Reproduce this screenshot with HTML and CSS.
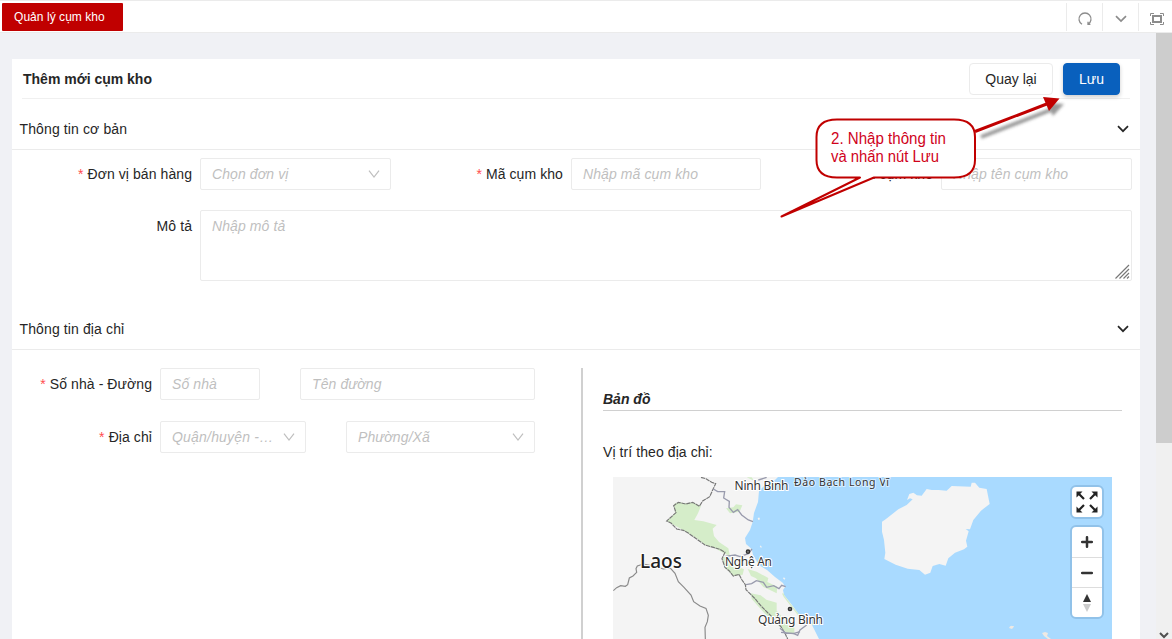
FILE: index.html
```html
<!DOCTYPE html>
<html lang="vi">
<head>
<meta charset="utf-8">
<title>Quản lý cụm kho</title>
<link rel="stylesheet" href="styles.css">
</head>
<body>
<div class="app">
  <header class="topbar">
    <div class="tab">Quản lý cụm kho</div>
    <div class="tools">
      <div class="tool"><svg width="16" height="16" viewBox="0 0 16 16"><path d="M5 13.2A6 6 0 1 1 11 13.2M11 10.8V13.4H13.4" fill="none" stroke="#8c8c8c" stroke-width="1.3"/></svg></div>
      <div class="tool"><svg width="12" height="12" viewBox="0 0 12 12"><path d="M1 3.2L6 8.1L11 3.2" fill="none" stroke="#8c8c8c" stroke-width="1.7"/></svg></div>
      <div class="tool"><svg width="14" height="12" viewBox="0 0 14 12"><path d="M.5 3V.5H4M10 .5H13.5V3M13.5 9V11.5H10M4 11.5H.5V9" fill="none" stroke="#8c8c8c"/><rect x="3" y="3" width="8" height="6" fill="none" stroke="#8c8c8c" stroke-width="2"/></svg></div>
    </div>
  </header>
  <div class="body">
    <main class="card">
      <div class="card-head">
        <h1>Thêm mới cụm kho</h1>
        <div class="actions"><button class="btn">Quay lại</button><button class="btn primary">Lưu</button></div>
      </div>
      <div class="section-head"><span>Thông tin cơ bản</span><svg width="12" height="8" viewBox="0 0 12 8"><path d="M1 1.2L6 6.2L11 1.2" fill="none" stroke="#262626" stroke-width="1.7"/></svg></div>
      <div class="basic">
        <label class="req">Đơn vị bán hàng</label>
        <div class="field select"><span>Chọn đơn vị</span><svg width="12" height="8" viewBox="0 0 12 8"><path d="M1 .6L6 7L11 .6" fill="none" stroke="#bfbfbf" stroke-width="1.2"/></svg></div>
        <label class="req">Mã cụm kho</label>
        <div class="field"><span>Nhập mã cụm kho</span></div>
        <label class="req">Tên cụm kho</label>
        <div class="field"><span>Nhập tên cụm kho</span></div>
      </div>
      <div class="describe">
        <label>Mô tả</label>
        <div class="field area"><span>Nhập mô tả</span><svg width="15" height="15" viewBox="0 0 15 15"><path d="M.5 14.5L14 1M4.5 14.5L14 5M8.5 14.5L14 9M12 14.5L14 12.5" fill="none" stroke="#777" stroke-width="1.2"/></svg></div>
      </div>
      <div class="section-head second"><span>Thông tin địa chỉ</span><svg width="12" height="8" viewBox="0 0 12 8"><path d="M1 1.2L6 6.2L11 1.2" fill="none" stroke="#262626" stroke-width="1.7"/></svg></div>
      <div class="address">
        <div class="address-form">
          <div class="row street">
            <label class="req">Số nhà - Đường</label>
            <div class="field"><span>Số nhà</span></div>
            <div class="field"><span>Tên đường</span></div>
          </div>
          <div class="row area-row">
            <label class="req">Địa chỉ</label>
            <div class="field select"><span>Quận/huyện -…</span><svg width="12" height="8" viewBox="0 0 12 8"><path d="M1 .6L6 7L11 .6" fill="none" stroke="#bfbfbf" stroke-width="1.2"/></svg></div>
            <div class="field select"><span>Phường/Xã</span><svg width="12" height="8" viewBox="0 0 12 8"><path d="M1 .6L6 7L11 .6" fill="none" stroke="#bfbfbf" stroke-width="1.2"/></svg></div>
          </div>
        </div>
        <div class="map-panel">
          <h2>Bản đồ</h2>
          <p>Vị trí theo địa chỉ:</p>
          <div class="map">
            <svg class="map-art" width="499" height="162" viewBox="613 477 499 162">
              <rect x="613" y="477" width="499" height="162" fill="#a9daff"/>
              <path d="M613 477H778L774 481L764 486L759 491L758 502L754 513L752.700 522L750 530L745 538L746 544L751.700 549L753 555L759 565L767 570L775 577L783 583L785 587L783 590L784 595L792 605L800 616L806 621L812 625L819 639H613Z" fill="#f4f4f4"/>
              <g transform="translate(600 470) scale(.333333)">
                <path d="M222 102L235 96L255 100L278 97L303 108L294 130L283 150L310 154L350 165L338 176L342 198L357 216L385 235L390 258L376 252L345 235L315 225L290 205L245 178L200 153L225 130ZM378 115L400 112L408 103L427 106L419 125L390 130ZM367 260L390 264L400 286L432 298L428 314L400 318L374 292ZM443 297L470 305L505 324L502 336L532 350L530 370L510 360L490 351L468 325L453 318ZM452 370L482 376L499 389L530 398L530 422L545 439L545 452L583 473L583 490L560 488L520 452L500 437L455 387ZM440 22L455 22L462 32Z" fill="#d5edc9"/>
                <path d="M40 362L50 353L62 347L76 349L83 344L88 324L99 318L110 307L108 296L112 288L130 282L160 288L190 297L211 294L225 310L235 335L252 352L273 375L281 395L300 408L318 415L325 436L322 455L315 472L316 507" fill="none" stroke="#8a8a8a" stroke-width="3.500"/>
                <path d="M303 22L318 26L335 37L347 41L338 60L329 80L308 93L298 109L278 97L257 102L235 97L221 107L228 128L200 153L214 160L230 177L250 181L266 190L290 207L315 225L343 233L360 238L375 247L366 266L375 292L388 303L400 318L417 313L426 330L436 344L438 359L465 386L485 410L504 429L527 451L545 473L555 490L563 507" fill="none" stroke="#777" stroke-width="3.500" stroke-dasharray="13 2"/>
                <path d="M340 57L353 65L374 65L371 84L388 94L387 112L400 127L413 119L425 135L445 150L459 155M376 259L405 255L420 260L445 251L456 237M438 344L455 341L469 332L490 337L500 352L521 347L537 356L545 346L557 350M475 30L500 22M543 487L580 491L600 485" fill="none" stroke="#999bad" stroke-width="4"/>
                <path d="M548 370L553 380L580 415L600 440L640 465" fill="none" stroke="#d5edc9" stroke-width="4"/>
                <path d="M474 147L479 145M481 231L484 229M551 327L554 324" stroke="#f4f4f4" stroke-width="6"/>
                <circle cx="444" cy="245" r="5" fill="#777" stroke="#333" stroke-width="4"/>
                <circle cx="570" cy="417" r="5" fill="#777" stroke="#333" stroke-width="4"/>
              </g>
              <g transform="translate(780 470) scale(.333333)">
                <path d="M306 155L318 147L355 118L380 105L398 88L390 85L381 90L388 72L400 68L411 76L425 77L440 57L455 60L475 60L500 62L515 48L572 50L575 38L585 38L598 53L620 57L629 102L603 122L580 150L570 178L557 177L566 184L558 212L562 230L552 238L525 248L505 265L497 287L478 282L458 288L451 308L435 314L418 300L383 296L347 284L313 267L316 248L312 210L306 185Z" fill="#f4f4f4"/>
                <path d="M0 475L18 490L40 490L53 496L60 480L80 465" fill="none" stroke="#999bad" stroke-width="4"/>
                <path d="M687 472L694 467L702 470L697 475Z" fill="#eee9e4"/>
              </g>
              <path d="M1009 628L1011 626L1014 626L1012 629ZM1042 633L1045 632L1048 633L1047 636L1051 639H1048L1044 636Z" fill="#eee9e4"/>
              <g class="place">
                <text x="734.500" y="490" textLength="54">Ninh Bình</text>
                <text x="725" y="566" textLength="47">Nghệ An</text>
                <text x="758" y="623.500" textLength="65">Quảng Bình</text>
                <text class="island" x="794" y="485.500" textLength="95">Đảo Bạch Long Vĩ</text>
                <text class="country" x="640" y="568" textLength="42">Laos</text>
              </g>
            </svg>
            <div class="map-controls">
              <div class="ctl"><svg width="22" height="22" viewBox="0 0 22 22"><g fill="#222" stroke="#222"><path d="M.5 .5H6.500L.5 6.500ZM21.500 .5V6.500L15.500 .5ZM.5 21.500V15.500L6.500 21.500ZM21.500 21.500H15.500L21.500 15.500Z" stroke="none"/><path d="M3 3L8 8M19 3L14 8M3 19L8 14M19 19L14 14" stroke-width="2.200"/></g></svg></div>
              <div class="ctl-group">
                <div class="cell"><svg width="12" height="12" viewBox="0 0 12 12"><path d="M6 1.200V10.800M1.200 6H10.800" stroke="#333" stroke-width="2.500" stroke-linecap="round"/></svg></div>
                <div class="cell"><svg width="12" height="12" viewBox="0 0 12 12"><path d="M1.200 6H10.800" stroke="#333" stroke-width="2.500" stroke-linecap="round"/></svg></div>
                <div class="cell"><svg width="8" height="18" viewBox="0 0 8 18"><path d="M4 0L8 8H0Z" fill="#333"/><path d="M4 18L8 10H0Z" fill="#ccc"/></svg></div>
              </div>
            </div>
          </div>
        </div>
      </div>
    </main>
    <div class="scrollbar"><div class="thumb"></div><svg width="10" height="7" viewBox="0 0 10 7"><path d="M1 1L5 5L9 1" fill="none" stroke="#505050" stroke-width="2"/></svg></div>
  </div>
  <svg class="callout" width="300" height="140" viewBox="770 90 300 140">
    <defs><filter id="soft" x="-20%" y="-20%" width="140%" height="140%"><feGaussianBlur stdDeviation="1.500"/></filter></defs>
    <g filter="url(#soft)" opacity=".5"><path d="M981 137L1053 109" stroke="#333" stroke-width="4"/><path d="M1047 103L1064 104L1053 116Z" fill="#333"/></g>
    <path d="M975 131.500L1048 103.500" stroke="#c00000" stroke-width="3"/>
    <path d="M1043 97L1059.500 98.500L1049 111Z" fill="#c00000"/>
    <path d="M837 119.500H954Q975 119.500 975 137V160Q975 177.500 954 177.500H874L781.500 216.500L860 177.500H837Q816.500 177.500 816.500 160V137Q816.500 119.500 837 119.500Z" fill="#fff" stroke="#c00000" stroke-width="2" stroke-linejoin="round"/>
    <text x="831" y="144" textLength="115" lengthAdjust="spacingAndGlyphs">2. Nhập thông tin</text>
    <text x="831" y="162" textLength="108" lengthAdjust="spacingAndGlyphs">và nhấn nút Lưu</text>
  </svg>
</div>
</body>
</html>
```

FILE: styles.css
```css
* { box-sizing: border-box; }
body { margin: 0; font: 14px/22px "Liberation Sans", Arial, sans-serif; color: #262626; }
.app { position: relative; width: 1172px; height: 639px; overflow: hidden; display: flex; flex-direction: column; background: #f0f1f5; }
svg { display: block; flex: none; }
.topbar { height: 33px; flex: none; background: #fff; border-top: 1px solid #ebebeb; border-bottom: 1px solid #ebebeb; display: flex; justify-content: space-between; padding: 2px 0 1px 2px; }
.tab { width: 121px; height: 28px; background: #c00000; color: #fff; font-size: 12px; line-height: 28px; padding-left: 12px; border-radius: 1px; letter-spacing: .05px; white-space: nowrap; }
.tools { display: flex; height: 28px; }
.tool { width: 36px; flex: none; border-left: 1px solid #ebebeb; display: flex; align-items: center; justify-content: center; padding-top: 3px; }
.tool:last-child { width: 34px; padding-left: 3px; }
.body { flex: 1; min-height: 0; display: flex; justify-content: space-between; padding-left: 12px; }
.card { width: 1128px; margin-top: 26px; background: #fff; }
.card-head { height: 40px; margin: 0 10px; border-bottom: 1px solid #f0f0f0; display: flex; align-items: center; justify-content: space-between; padding: 0 10px 0 1px; }
h1 { margin: 0; font-size: 14px; }
.actions { display: flex; gap: 10px; }
.btn { width: 84px; height: 32px; border: 1px solid #ebebeb; border-radius: 4px; background: #fff; color: #262626; font: 14px "Liberation Sans", Arial, sans-serif; padding: 0; }
.primary { width: 57px; background: #0960bd; border-color: #0960bd; color: #fff; box-shadow: 0 2px 4px #0003; }
.section-head { height: 51px; border-bottom: 1px solid #ebebeb; display: flex; align-items: center; justify-content: space-between; padding: 9px 11px 0 7.5px; letter-spacing: .12px; }
.second { margin-top: 18px; }
label { text-align: right; padding-right: 8px; line-height: 32px; white-space: nowrap; letter-spacing: .08px; }
.req::before { content: "*"; color: #ff4d4f; margin-right: 4px; }
.basic { display: grid; grid-template-columns: 188px 191px 180px 190px 180px 191px; padding-top: 8px; height: 60px; }
.field { height: 32px; border: 1px solid #ebebeb; border-radius: 2px; background: #fff; color: #bfbfbf; font-style: italic; line-height: 30px; padding: 0 11px; white-space: nowrap; letter-spacing: .1px; }
.select { display: flex; align-items: center; justify-content: space-between; padding-right: 10px; }
.describe { display: grid; grid-template-columns: 188px 932px; height: 71px; }
.area { height: 71px; display: flex; justify-content: space-between; padding-right: 1px; }
.area svg { align-self: flex-end; margin-bottom: 1px; }
.address { display: flex; padding-top: 18px; height: 300px; }
.address-form { width: 571px; flex: none; border-right: 2px solid #d0d0d0; display: flex; flex-direction: column; gap: 21px; }
.row { display: grid; }
.street { grid-template-columns: 148px 100px 235px; }
.street .field:last-child { margin-left: 40px; width: 235px; }
.area-row { grid-template-columns: 148px 146px 189px; }
.area-row .field:last-child { margin-left: 40px; width: 189px; }
.area-row .field:nth-child(2) { letter-spacing: .2px; }
.map-panel { width: 519px; margin-left: 20px; padding-top: 20px; }
h2 { margin: 0; height: 23px; font-size: 14px; line-height: 22px; font-style: italic; border-bottom: 1px solid #d0d0d0; }
p { margin: 30px 0 14px; letter-spacing: .08px; }
.map { position: relative; margin-left: 10px; width: 499px; height: 162px; }
.place { font: 12px "Noto Sans", sans-serif; fill: #333; stroke: #fff; stroke-width: 2px; paint-order: stroke; }
.island { font-size: 10.5px; stroke: #d9eeff; }
.country { font-size: 19px; font-weight: 500; fill: #222; }
.map-controls { position: absolute; right: 8px; top: 8px; display: flex; flex-direction: column; gap: 6px; }
.ctl, .ctl-group { width: 34px; border: 2px solid #91c2e9; border-radius: 6px; background: #fff; }
.ctl { height: 34px; display: flex; align-items: center; justify-content: center; }
.cell { height: 30px; display: flex; align-items: center; justify-content: center; }
.cell + .cell { border-top: 1px solid #ddd; }
.scrollbar { width: 16px; background: #f0f0f0; display: flex; flex-direction: column; align-items: center; justify-content: space-between; }
.thumb { width: 16px; height: 410px; background: #cdcdcd; }
.callout { position: absolute; left: 770px; top: 90px; }
.callout text { font: 16px "Liberation Sans", Arial, sans-serif; fill: #d0021b; }
```
